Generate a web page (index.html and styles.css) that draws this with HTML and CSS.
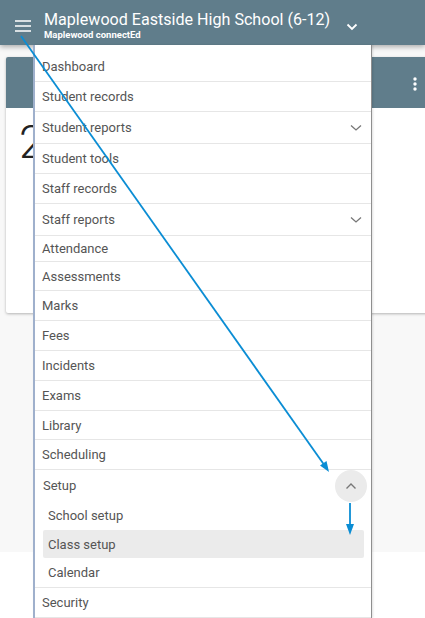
FILE: index.html
```html
<!DOCTYPE html>
<html lang="en">
<head>
<meta charset="utf-8">
<link rel="stylesheet" href="styles.css">
</head>
<body>
<header class="appbar">
  <button class="menu-btn" aria-label="Menu">
    <svg width="16" height="12" viewBox="0 0 16 12"><path d="M0 1h16M0 6h16M0 11h16" stroke="#fff" stroke-width="1.6"/></svg>
  </button>
  <div class="titles">
    <div class="title">Maplewood Eastside High School (6-12)</div>
    <div class="subtitle">Maplewood connectEd</div>
  </div>
  <svg class="title-chev" width="12" height="8" viewBox="0 0 12 8"><path d="M1.5 1.5L6 6l4.5-4.5" fill="none" stroke="#fff" stroke-width="1.8"/></svg>
</header>

<main class="page">
  <section class="card">
    <div class="card-head">
      <svg class="kebab" width="4" height="14" viewBox="0 0 4 14"><circle cx="2" cy="2" r="1.7" fill="#fff"/><circle cx="2" cy="7" r="1.7" fill="#fff"/><circle cx="2" cy="12" r="1.7" fill="#fff"/></svg>
    </div>
    <div class="card-body">
      <div class="big-num">2</div>
    </div>
  </section>
</main>
<div class="page-foot"></div>

<nav class="dropdown">
  <div class="item">Dashboard</div>
  <div class="item">Student records</div>
  <div class="item item--group">Student reports<svg class="chev" width="12" height="8" viewBox="0 0 12 8"><path d="M1 1.5L6 6l5-4.5" fill="none" stroke="#777" stroke-width="1.3"/></svg></div>
  <div class="item">Student tools</div>
  <div class="item">Staff records</div>
  <div class="item item--group">Staff reports<svg class="chev" width="12" height="8" viewBox="0 0 12 8"><path d="M1 1.5L6 6l5-4.5" fill="none" stroke="#777" stroke-width="1.3"/></svg></div>
  <div class="item item--short">Attendance</div>
  <div class="item">Assessments</div>
  <div class="item">Marks</div>
  <div class="item">Fees</div>
  <div class="item">Incidents</div>
  <div class="item">Exams</div>
  <div class="item">Library</div>
  <div class="item">Scheduling</div>
  <div class="group-open">
    <div class="group-head">Setup
      <span class="collapse-btn"><svg width="12" height="8" viewBox="0 0 12 8"><path d="M1.5 6.5L6 2l4.5 4.5" fill="none" stroke="#777" stroke-width="1.4"/></svg></span>
    </div>
    <div class="sub">School setup</div>
    <div class="sub sub--active">Class setup</div>
    <div class="sub">Calendar</div>
  </div>
  <div class="item">Security</div>
</nav>

<svg class="annot" width="425" height="618" viewBox="0 0 425 618">
  <line x1="21" y1="36" x2="325" y2="466" stroke="#0b8dd4" stroke-width="1.8"/>
  <polygon points="329,472 320,465.5 326.5,461" fill="#0b8dd4"/>
  <line x1="350" y1="503" x2="350" y2="526" stroke="#0b8dd4" stroke-width="1.8"/>
  <polygon points="350,535 346,524 354,524" fill="#0b8dd4"/>
</svg>
</body>
</html>
```

FILE: styles.css
```css
* { box-sizing: border-box; }
html, body { margin: 0; padding: 0; }
body {
  width: 425px;
  height: 618px;
  overflow: hidden;
  position: relative;
  font-family: Roboto, "Liberation Sans", sans-serif;
  background: #ffffff;
}

.appbar {
  height: 45px;
  background: #607d8b;
  display: flex;
  align-items: center;
  padding-left: 15px;
  color: #fff;
  box-shadow: 0 2px 5px rgba(0,0,0,0.3);
  position: relative;
  z-index: 2;
}
.menu-btn {
  border: 0;
  background: none;
  padding: 0;
  width: 16px;
  height: 12px;
  display: flex;
  margin-top: 6px;
}
.titles {
  margin-left: 13px;
  display: flex;
  flex-direction: column;
  margin-top: 5px;
}
.title {
  font-size: 16.1px;
  line-height: 20px;
  white-space: nowrap;
}
.subtitle {
  font-size: 9.5px;
  font-weight: 700;
  line-height: 11px;
  margin-top: -1px;
}
.title-chev {
  margin-left: 16px;
  margin-top: 8px;
}

.page {
  background: #f8f8f8;
  height: 507px;
  padding: 12px 0 0 6px;
}
.card {
  background: #fff;
  border-radius: 2px;
  box-shadow: 0 1px 3px rgba(0,0,0,0.28);
  height: 256px;
  margin-right: -4px;
  overflow: hidden;
}
.card-head {
  height: 51px;
  background: #607d8b;
  display: flex;
  justify-content: flex-end;
  align-items: center;
  padding-right: 12px;
}
.kebab { margin-top: 2px; }
.card-body {
  padding: 8px 0 0 13px;
}
.big-num {
  font-size: 46px;
  font-weight: 300;
  color: #222;
  line-height: 52px;
}

.dropdown {
  position: absolute;
  left: 33px;
  top: 45px;
  width: 339px;
  background: #fff;
  border-left: 2px solid #9fb0cc;
  border-right: 1px solid #8f8f8f;
  padding-top: 7px;
  z-index: 3;
  box-shadow: 1px 0 2px rgba(0,0,0,0.12);
  color: #555;
  font-size: 13px;
}
.item {
  height: 29.8px;
  display: flex;
  align-items: center;
  padding-left: 7px;
  border-bottom: 1px solid #e6e6e6;
  position: relative;
}
.item--group { height: 32.5px; }
.item--short { height: 25.5px; }
.chev {
  position: absolute;
  right: 9px;
  top: 50%;
  margin-top: -3px;
}
.group-open {
  border-bottom: 1px solid #e6e6e6;
  padding-bottom: 0;
}
.group-head {
  height: 31px;
  display: flex;
  align-items: center;
  justify-content: space-between;
  padding-left: 8px;
  padding-right: 4px;
}
.collapse-btn {
  width: 32px;
  height: 32px;
  border-radius: 50%;
  background: #ebebeb;
  display: flex;
  align-items: center;
  justify-content: center;
}
.sub {
  height: 29px;
  margin: 0 7px 0 8px;
  padding-left: 5px;
  display: flex;
  align-items: center;
  border-radius: 2px;
}
.sub--active { background: #ebebeb; height: 28px; }

.annot {
  position: absolute;
  left: 0;
  top: 0;
  z-index: 5;
  pointer-events: none;
}
```
